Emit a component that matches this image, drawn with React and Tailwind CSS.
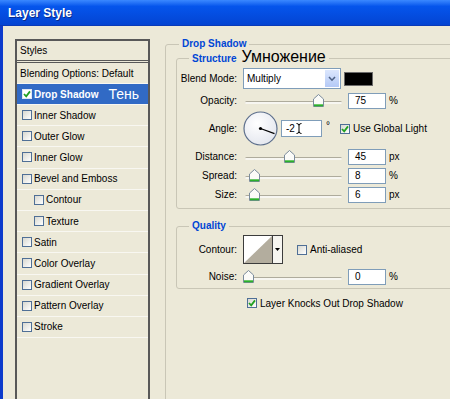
import React from 'react'

const items = [
  { name: 'Inner Shadow' },
  { name: 'Outer Glow' },
  { name: 'Inner Glow' },
  { name: 'Bevel and Emboss' },
  { name: 'Contour', sub: true },
  { name: 'Texture', sub: true },
  { name: 'Satin' },
  { name: 'Color Overlay' },
  { name: 'Gradient Overlay' },
  { name: 'Pattern Overlay' },
  { name: 'Stroke' },
]

function Check({ checked }) {
  return (
    <span className="flex h-[10px] w-[10px] shrink-0 items-center justify-center border border-[#4f6f96] bg-linear-to-br from-[#d8d8d0] to-white">
      {checked && (
        <svg width="8" height="8" viewBox="0 0 8 8">
          <path d="M1 4 L3.2 6.3 L7 1.4" fill="none" stroke="#21a121" strokeWidth="1.8" />
        </svg>
      )}
    </span>
  )
}

function Slider({ pos }) {
  // pos = thumb centre, px from the left end of the track
  return (
    <div className="relative ml-[2px] h-[13px] w-[97px] shrink-0">
      <div className="absolute left-0 right-0 top-[7px] h-[3px] rounded-sm border-t border-[#aeab9c] bg-[#f7f6f1]" />
      <svg className="absolute top-0" style={{ left: pos - 5 }} width="11" height="13" viewBox="0 0 11 13">
        <path d="M0.5 12.5 V5 L5.5 0.5 L10.5 5 V12.5 Z" fill="#fbfbf8" stroke="#7b8b9c" />
        <line x1="1" y1="11.3" x2="10" y2="11.3" stroke="#2bb02b" strokeWidth="2" />
      </svg>
    </div>
  )
}

function Field({ value, unit }) {
  return (
    <>
      <div className="ml-[6px] flex h-[16px] w-[38px] shrink-0 items-center border border-[#7f9db9] bg-white pl-[6px]">{value}</div>
      <span className="ml-[3px]">{unit}</span>
    </>
  )
}

function Row({ label, h, children }) {
  return (
    <div className={`flex items-center ${h}`}>
      <span className="w-[66px] shrink-0 pr-[6px] text-right">{label}</span>
      {children}
    </div>
  )
}

export default function App() {
  return (
    <div className="flex h-[399px] w-[450px] flex-col overflow-hidden bg-[#ece9d8] font-['Liberation_Sans',Arial,sans-serif] text-[10px] text-black">
      <div className="flex h-[26px] shrink-0 items-center border-b border-[#0a3ab8] bg-linear-to-b from-[#3a88ff] via-[#0555ec] via-25% to-[#0444d2] pl-[8px]">
        <span className="text-[12px] font-bold text-white [text-shadow:1px_1px_0_#0a2a8a]">Layer Style</span>
      </div>

      <div className="flex flex-1 border-l-[3px] border-[#0d3bcc]">
        <div className="shrink-0 pl-[12px] pt-[13px]">
          <div className="h-[380px] w-[135px] border-2 border-[#585858]">
            <div className="flex h-[22px] items-center border-b-[3px] border-double border-[#585858] pl-[3px]">Styles</div>
            <div className="flex h-[21px] items-center border-b border-[#f8f7f1] pl-[3px]">Blending Options: Default</div>
            <div className="flex h-[21px] items-center border-b border-[#f8f7f1] bg-[#316ac5] pl-[5px]">
              <span className="flex h-[10px] w-[10px] items-center justify-center border border-[#dfe6f3] bg-white">
                <svg width="8" height="8" viewBox="0 0 8 8">
                  <path d="M1 4 L3.2 6.3 L7 1.4" fill="none" stroke="#21a121" strokeWidth="1.8" />
                </svg>
              </span>
              <span className="ml-[2px] font-bold text-white">Drop Shadow</span>
              <span className="ml-[10px] text-[14px] leading-[14px] text-white">Тень</span>
            </div>
            {items.map((it) => (
              <div
                key={it.name}
                className={`flex h-[21.2px] items-center border-b border-[#f8f7f1] ${it.sub ? 'pl-[17px]' : 'pl-[5px]'}`}
              >
                <Check />
                <span className="ml-[2px]">{it.name}</span>
              </div>
            ))}
          </div>
        </div>

        <div className="ml-[15px] w-[300px] shrink-0 pt-[12px]">
          <fieldset className="h-[380px] rounded-[3px] border border-[#c9c6b6] pl-[10px] pr-[10px]">
            <legend className="ml-[3px] px-[3px] text-[10px] leading-[12px] font-bold text-[#0046d5]">Drop Shadow</legend>

            <fieldset className="mt-[1px] rounded-[3px] border border-[#c9c6b6] pb-[4px]">
              <legend className="ml-[12px] flex items-baseline px-[3px] leading-[12px]">
                <span className="font-bold text-[#0046d5]">Structure</span>
                <span className="ml-[5px] text-[16px] leading-[12px] text-black">Умножение</span>
              </legend>

              <Row label="Blend Mode:" h="mt-[3px] h-[21px]">
                <div className="flex h-[21px] w-[98px] items-center border border-[#7f9db9] bg-white pl-[3px]">
                  <span className="flex-1">Multiply</span>
                  <div className="flex h-full w-[16px] items-center justify-center border border-white bg-linear-to-b from-[#dce7fd] to-[#b4c9f6]">
                    <svg width="8" height="6" viewBox="0 0 8 6">
                      <path d="M1 1 L4 4.2 L7 1" stroke="#4d6185" strokeWidth="1.6" fill="none" />
                    </svg>
                  </div>
                </div>
                <div className="ml-[3px] h-[14px] w-[29px] border border-[#6b6b6b] bg-black" />
              </Row>

              <Row label="Opacity:" h="mt-[2px] h-[19px]">
                <Slider pos={73} />
                <Field value="75" unit="%" />
              </Row>

              <Row label="Angle:" h="h-[37px]">
                <svg width="35" height="35" viewBox="0 0 35 35" className="shrink-0">
                  <defs>
                    <radialGradient id="dial" cx="40%" cy="35%" r="70%">
                      <stop offset="0" stopColor="#ffffff" />
                      <stop offset="1" stopColor="#e3e6ee" />
                    </radialGradient>
                  </defs>
                  <circle cx="17.5" cy="17.5" r="16.5" fill="url(#dial)" stroke="#5d6f8c" strokeWidth="1.2" />
                  <circle cx="17.5" cy="17.5" r="1.6" fill="#000" />
                  <line x1="17.5" y1="17.5" x2="31.5" y2="22.6" stroke="#000" strokeWidth="1.2" />
                </svg>
                <div className="ml-[3px] flex h-[17px] w-[41px] items-center border border-[#7f9db9] bg-white pl-[4px]">
                  <span>-2</span>
                  <svg width="6" height="11" viewBox="0 0 6 11" className="ml-[1px]">
                    <path d="M0.5 0.5 Q3 0.5 3 2.5 V8.5 Q3 10.5 0.5 10.5 M5.5 0.5 Q3 0.5 3 2.5 M3 8.5 Q3 10.5 5.5 10.5" stroke="#000" fill="none" />
                  </svg>
                </div>
                <span className="ml-[4px] self-start pt-[8px]">°</span>
                <span className="ml-[10px]"><Check checked /></span>
                <span className="ml-[3px]">Use Global Light</span>
              </Row>

              <Row label="Distance:" h="h-[19px]">
                <Slider pos={44} />
                <Field value="45" unit="px" />
              </Row>
              <Row label="Spread:" h="h-[19px]">
                <Slider pos={9} />
                <Field value="8" unit="%" />
              </Row>
              <Row label="Size:" h="h-[19px]">
                <Slider pos={9} />
                <Field value="6" unit="px" />
              </Row>
            </fieldset>

            <fieldset className="mt-[11px] rounded-[3px] border border-[#c9c6b6] pb-[2px]">
              <legend className="ml-[12px] px-[3px] leading-[12px] font-bold text-[#0046d5]">Quality</legend>
              <Row label="Contour:" h="mt-[3px] h-[29px]">
                <div className="flex h-[29px] w-[40px] border border-[#3c3c3c] bg-white">
                  <svg width="28" height="27" viewBox="0 0 28 27">
                    <polygon points="0,27 28,0 28,27" fill="#b3ad9e" />
                  </svg>
                  <div className="flex flex-1 items-center justify-center border-l border-[#3c3c3c] bg-[#f6f5f0]">
                    <svg width="5" height="3" viewBox="0 0 5 3">
                      <polygon points="0,0 5,0 2.5,3" fill="#000" />
                    </svg>
                  </div>
                </div>
                <span className="ml-[14px]"><Check /></span>
                <span className="ml-[3px]">Anti-aliased</span>
              </Row>
              <Row label="Noise:" h="mt-[3px] h-[19px]">
                <Slider pos={3} />
                <Field value="0" unit="%" />
              </Row>
            </fieldset>

            <div className="ml-[71px] mt-[7px] flex h-[14px] items-center">
              <Check checked />
              <span className="ml-[3px]">Layer Knocks Out Drop Shadow</span>
            </div>
          </fieldset>
        </div>
      </div>
    </div>
  )
}
